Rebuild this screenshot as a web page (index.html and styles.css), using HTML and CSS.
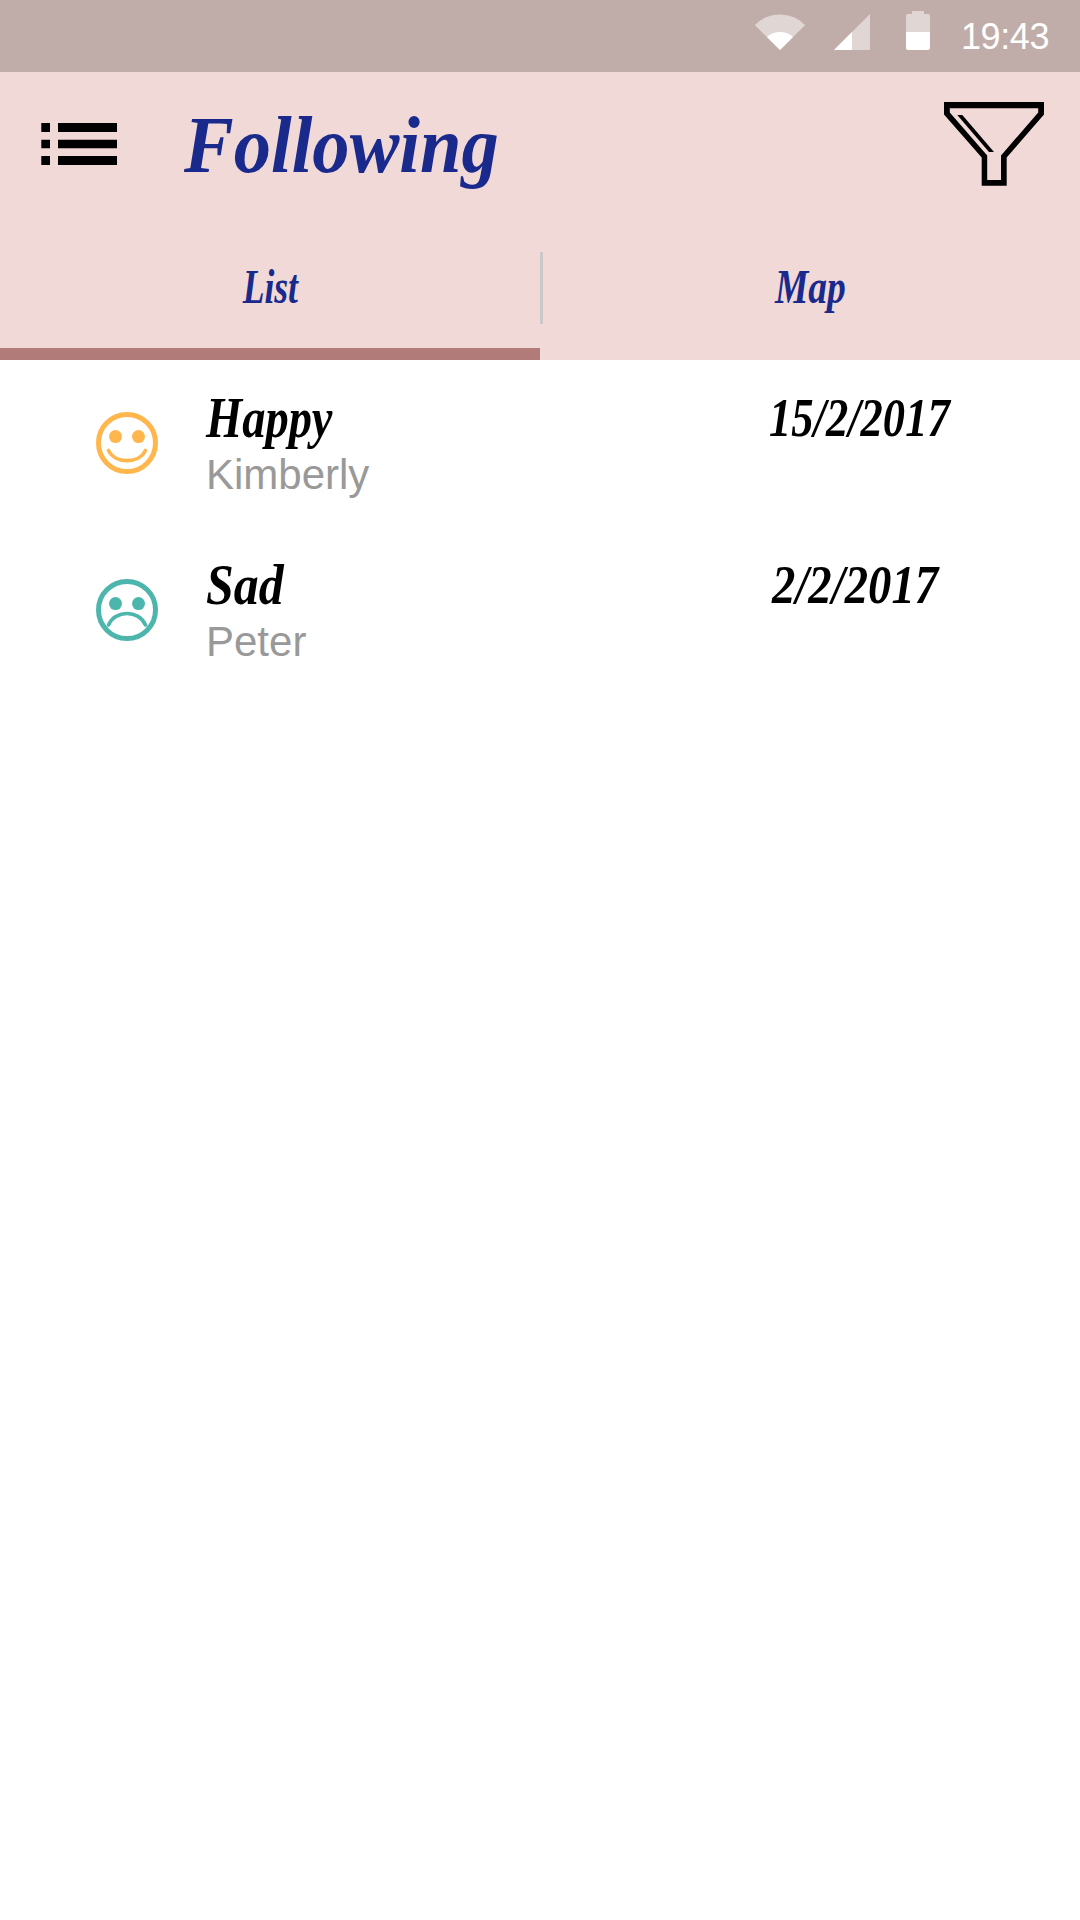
FILE: index.html
```
<!DOCTYPE html>
<html lang="en">
<head>
<meta charset="utf-8">
<title>Following</title>
<link rel="stylesheet" href="styles.css">
</head>
<body>
<div class="status">
  <svg class="wifi" width="52" height="36" viewBox="0 0 52 36"><path d="M26 36 .8 11Q11 .5 26 .5T51.200 11Z" fill="#e0d6d4"/><path d="M26 36 13 23Q18 18 26 18T39 23Z" fill="#fff"/></svg>
  <svg class="signal" width="36" height="36" viewBox="0 0 36 36"><path d="M0 36 36 0V36Z" fill="#e0d6d4"/><path d="M0 36 18 18V36Z" fill="#fff"/></svg>
  <svg class="battery" width="24" height="39" viewBox="0 0 24 39"><path d="M6 0H18V3H22Q24 3 24 5V21H0V5Q0 3 2 3H6Z" fill="#e0d6d4"/><path d="M0 21H24V37Q24 39 22 39H2Q0 39 0 37Z" fill="#fff"/></svg>
  <span class="clock">19:43</span>
</div>
<header class="toolbar">
  <svg class="menu" width="76" height="42" viewBox="0 0 76 42"><path d="M.3 0H9V9H.3ZM17 0H76V9H17ZM.3 16.700H9V25.300H.3ZM17 16.700H76V25.300H17ZM.3 33H9V42H.3ZM17 33H76V42H17Z"/></svg>
  <h1 class="title"><span class="script script-title">Following</span></h1>
  <svg class="filter" width="100" height="84" viewBox="0 0 100 84"><path fill-rule="evenodd" d="M0 0H100V12.500L62.700 55.500V83.700H37.700V55.500L0 12.500ZM5.800 6.300V10.500L43.200 53.500V78H57V53.500L94.200 10.500V6.300Z"/><path d="M13.300 13H18.300L50 50H45Z"/></svg>
</header>
<nav class="tabs">
  <a class="tab active"><span class="script script-list">List</span></a>
  <a class="tab map"><span class="script script-map">Map</span></a>
</nav>
<main class="feed">
  <article class="row">
    <svg class="face happy" width="62" height="62" viewBox="0 0 62 62"><circle class="line ring" cx="31" cy="31" r="28.500"/><circle class="eye" cx="19.500" cy="24.600" r="6.500"/><circle class="eye" cx="42.500" cy="24.600" r="6.500"/><path class="line" d="M12.500 38.500C19 52 43 52 49.500 38.500"/></svg>
    <div class="who"><h2 class="mood"><span class="script script-happy">Happy</span></h2><p class="name">Kimberly</p></div>
    <time class="date"><span class="script script-date">15/2/2017</span></time>
  </article>
  <article class="row">
    <svg class="face sad" width="62" height="62" viewBox="0 0 62 62"><circle class="line ring" cx="31" cy="31" r="28.500"/><circle class="eye" cx="19.500" cy="24.600" r="6.500"/><circle class="eye" cx="42.500" cy="24.600" r="6.500"/><path class="line" d="M12.500 46C19 30.600 43 30.600 49.500 46"/></svg>
    <div class="who"><h2 class="mood"><span class="script script-sad">Sad</span></h2><p class="name">Peter</p></div>
    <time class="date short"><span class="script script-date-short">2/2/2017</span></time>
  </article>
</main>
</body>
</html>
```
FILE: styles.css
```
* { box-sizing: border-box; }
body { margin: 0; width: 1080px; min-height: 1920px; background: #fff; font-family: "Liberation Sans", Arial, sans-serif; }
h1, h2, p { margin: 0; }
svg { display: block; flex: none; }

.status { display: flex; align-items: flex-end; justify-content: flex-end; height: 72px; padding: 0 30px 22px 0; background: #c0adaa; }
.signal { margin-left: 28px; }
.battery { margin-left: 36px; }
.clock { width: 89px; margin-left: 31px; color: #fff; font-size: 36px; line-height: 26px; white-space: nowrap; letter-spacing: -0.4px; }

.toolbar { display: flex; align-items: center; height: 144px; padding: 0 36px 0 41px; background: #f0d9d7; }
.title { flex: 1; margin-left: 67px; font-size: 81px; line-height: 144px; color: #1a2a8c; }

/* Condensed bold italic display lettering */
.script { display: inline-block; font-family: "Liberation Serif", "Times New Roman", serif; font-weight: 700; font-style: italic; white-space: nowrap; transform-origin: left center; }
.script-title { transform: scaleX(0.92); }
.script-list, .script-map { transform-origin: center; }
.script-list { transform: scaleX(0.74); }
.script-map { transform: scaleX(0.78); }
.script-happy { transform: scaleX(0.83); }
.script-sad { transform: scaleX(0.89); }
.script-date { transform: scaleX(0.81); }
.script-date-short { transform: scaleX(0.85); }

.tabs { display: grid; grid-template: 144px / 1fr 1fr; background: #f0d9d7; }
.tab { text-align: center; font-size: 48px; line-height: 142px; color: #1a2a8c; }
.active { box-shadow: inset 0 -12px #b17b7a; }
.map { background: linear-gradient(#c9c9c9, #c9c9c9) 0 36px / 3px 72px no-repeat; }

.row { display: grid; grid-template-columns: 62px 514px 1fr; column-gap: 48px; height: 167px; padding: 29px 0 0 96px; }
.face { margin-top: 23px; }
.who { line-height: 56px; }
.mood { font-size: 56px; line-height: 58px; }
.name { font-size: 42px; line-height: 56px; color: #999; }
.date { padding-left: 1px; font-size: 55px; line-height: 57px; }
.short { padding-left: 4px; }
.line { fill: none; stroke: currentColor; stroke-width: 3.600; stroke-linecap: round; }
.ring { stroke-width: 5; }
.eye { fill: currentColor; }
.happy { color: #ffb74d; }
.sad { color: #4db6ac; }
```
